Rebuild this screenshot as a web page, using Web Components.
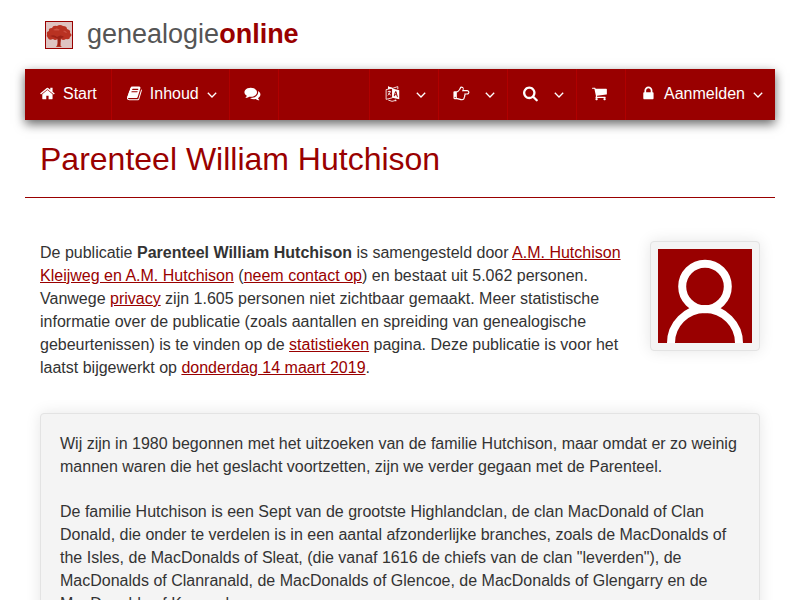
<!DOCTYPE html>
<html lang="nl">
<head>
<meta charset="utf-8">
<meta name="viewport" content="width=device-width, initial-scale=1">
<title>Parenteel William Hutchison</title>
<style>
  body {
    margin: 0;
    background: #fff;
    color: #333;
    font: 16px/23px "Liberation Sans", Arial, sans-serif;
  }
  a { color: #900; }
  p { margin: 0; }
</style>
</head>
<body>
<go-page>
  <go-logo slot="header"></go-logo>
  <go-navbar slot="nav">
    <go-nav-item icon="home" href="#start">Start</go-nav-item>
    <go-nav-item icon="book" menu>Inhoud</go-nav-item>
    <go-nav-item icon="comments" href="#forum" label="Forum"></go-nav-item>
    <go-nav-item slot="right" icon="language" menu label="Taal"></go-nav-item>
    <go-nav-item slot="right" icon="hand" menu label="Diensten"></go-nav-item>
    <go-nav-item slot="right" icon="search" menu label="Zoeken"></go-nav-item>
    <go-nav-item slot="right" icon="cart" href="#winkel" label="Winkelwagen"></go-nav-item>
    <go-nav-item slot="right" icon="lock" menu>Aanmelden</go-nav-item>
  </go-navbar>
  <go-title>Parenteel William Hutchison</go-title>
  <go-intro>
    <p>De publicatie <b>Parenteel William Hutchison</b> is samengesteld door <a href="#auteur">A.M. Hutchison Kleijweg en A.M. Hutchison</a> (<a href="#contact">neem contact op</a>) en bestaat uit 5.062 personen. Vanwege <a href="#privacy">privacy</a> zijn 1.605 personen niet zichtbaar gemaakt. Meer statistische informatie over de publicatie (zoals aantallen en spreiding van genealogische gebeurtenissen) is te vinden op de <a href="#statistieken">statistieken</a> pagina. Deze publicatie is voor het laatst bijgewerkt op <a href="#updates">donderdag 14 maart 2019</a>.</p>
    <go-avatar slot="photo"></go-avatar>
  </go-intro>
  <go-well>
    <p>Wij zijn in 1980 begonnen met het uitzoeken van de familie Hutchison, maar omdat er zo weinig mannen waren die het geslacht voortzetten, zijn we verder gegaan met de Parenteel.</p>
    <p>De familie Hutchison is een Sept van de grootste Highlandclan, de clan MacDonald of Clan Donald, die onder te verdelen is in een aantal afzonderlijke branches, zoals de MacDonalds of the Isles, de MacDonalds of Sleat, (die vanaf 1616 de chiefs van de clan "leverden"), de MacDonalds of Clanranald, de MacDonalds of Glencoe, de MacDonalds of Glengarry en de MacDonalds of Keppoch.</p>
  </go-well>
</go-page>

<script>
const ICONS = {
  home: '<path d="M1472 992v480q0 26-19 45t-45 19h-384v-384h-256v384h-384q-26 0-45-19t-19-45v-480q0-1 .5-3t.5-3l575-474 575 474q1 2 1 6zm223-69l-62 74q-8 9-21 11h-3q-13 0-21-7l-692-577-692 577q-12 8-24 7-13-2-21-11l-62-74q-8-10-7-23.5t11-21.5l719-599q32-26 76-26t76 26l244 204v-195q0-14 9-23t23-9h192q14 0 23 9t9 23v408l219 182q10 8 11 21.5t-7 23.5z"/>',
  book: '<path d="M1703 478q40 57 18 129l-275 906q-19 64-76.5 107.5t-122.5 43.5h-923q-77 0-148.5-53.5t-99.5-131.5q-24-67-2-127 0-4 3-27t4-37q1-8-3-21.5t-3-19.5q2-11 8-21t16.5-23.5 16.5-23.5q23-38 45-91.5t30-91.5q3-10 .5-30t-.5-28q3-11 17-28t17-23q21-36 42-92t25-90q1-9-2.5-32t.5-28q4-13 22-30.5t22-22.5q19-26 42.5-84.5t27.5-96.5q1-8-3-25.5t-2-26.5q2-8 9-18t18-23 17-21q8-12 16.5-30.5t15-35 16-36 19.5-32 26.5-23.5 36-11.5 47.5 5.5l-1 3q38-9 51-9h761q74 0 114 56t18 130l-274 906q-36 119-71.5 153.5t-128.5 34.5h-869q-27 0-38 15-11 16-1 43 24 70 144 70h923q29 0 56-15.5t35-41.5l300-987q7-22 5-57 38 15 59 43zm-1064 2q-4 13 2 22.5t20 9.5h608q13 0 25.5-9.5t16.5-22.5l21-64q4-13-2-22.5t-20-9.5h-608q-13 0-25.5 9.5t-16.5 22.5zm-83 256q-4 13 2 22.5t20 9.5h608q13 0 25.5-9.5t16.5-22.5l21-64q4-13-2-22.5t-20-9.5h-608q-13 0-25.5 9.5t-16.5 22.5z"/>',
  comments: '<path d="M1408 768q0 139-94 257t-256.5 186.5-353.5 68.5q-86 0-176-16-124 88-278 128-36 9-86 16h-3q-11 0-20.5-8t-11.5-21q-1-3-1-6.5t.5-6.5 2-6l2.5-5 3.5-5.5 4-5 4.5-5 4-4.5q5-6 23-25t26-29.5 22.5-29 25-38.5 20.5-44q-124-72-195-177t-71-224q0-139 94-257t256.5-186.5 353.5-68.5 353.5 68.5 256.5 186.5 94 257zm384 256q0 120-71 224.5t-195 176.5q10 24 20.5 44t25 38.5 22.5 29 26 29.5 23 25q1 1 4 4.5t4.5 5 4 5 3.5 5.5l2.5 5 2 6 .5 6.5-1 6.5q-3 14-13 22t-22 7q-50-7-86-16-154-40-278-128-90 16-176 16-271 0-472-132 58 4 88 4 161 0 309-45t264-129q125-92 192-212t67-254q0-77-23-152 129 71 204 178t75 230z"/>',
  language: '<g fill="none" stroke="#fff" stroke-width="95"><path d="M190 470L900 300V1380L190 1560Z"/><path d="M420 190L900 330L1500 130V420"/><path d="M380 690H700M540 600V690M660 700Q600 970 370 1110M430 830Q560 1050 720 1080"/><path d="M430 1640Q850 1900 1270 1680M1170 1640L1300 1650L1280 1780"/></g><path fill-rule="evenodd" d="M880 330L1660 540V1560L880 1370ZM1200 640L1040 1190L1150 1220L1185 1080L1370 1130L1405 1290L1510 1315L1345 680ZM1265 780L1340 1020L1210 985Z"/><path d="M400 90L900 290L400 440Z"/>',
  hand: '<path fill-rule="evenodd" d="M1792 768q0 105-75.5 180.5t-180.5 75.5h-169q-4 62-37 119 3 21 3 43 0 101-60 178 1 139-85 219.5t-227 80.5q-133 0-322-69-164-59-223-59h-288q-53 0-90.500-37.500T0 1408v-640q0-53 37.500-90.500t90.500-37.500h288C470 640 600 480 660 390C700 320 740 128 864 128C1030 128 1152 210 1152 384q0 70-22 128h406q105 0 180.500 75.500t75.500 180.500zM1664 768q0-51-39-89.500t-89-38.500h-576q0-20 15-48.500t33-55 33-68 15-84.500q0-67-44.500-97.500t-115.500-30.500q-24 0-90 139-24 44-37 65-40 64-112 145-71 81-101 106-69 57-140 57h-32v640h32q72 0 167 32t193.500 64 179.500 32q189 0 189-167 0-26-5-56 30-16 47.500-52.500t17.500-73.500-18-69q53-50 53-119 0-25-10-55.500t-25-47.500h331q52 0 90-38t38-90zM256 1344a64 64 0 1 0-128 0a64 64 0 1 0 128 0z"/>',
  search: '<path d="M1216 832q0-185-131.5-316.5t-316.5-131.5-316.5 131.5-131.5 316.5 131.5 316.5 316.5 131.5 316.5-131.5 131.5-316.5zm512 832q0 52-38 90t-90 38q-54 0-90-38l-343-342q-179 124-399 124-143 0-273.5-55.5t-225-150-150-225-55.5-273.5 55.5-273.5 150-225 225-150 273.5-55.5 273.5 55.5 225 150 150 225 55.5 273.5q0 220-124 399l343 343q37 37 37 90z"/>',
  cart: '<path d="M704 1536q0 52-38 90t-90 38-90-38-38-90 38-90 90-38 90 38 38 90zm896 0q0 52-38 90t-90 38-90-38-38-90 38-90 90-38 90 38 38 90zm128-1088v512q0 24-16.5 42.5t-40.5 21.5l-1044 122q13 60 13 70 0 16-24 64h920q26 0 45 19t19 45-19 45-45 19h-1024q-26 0-45-19t-19-45q0-11 8-31.5t16-36 21.5-40 15.5-29.5l-177-823h-204q-26 0-45-19t-19-45 19-45 45-19h256q16 0 28.5 6.5t19.5 15.5 13 24.5 8 26 5.5 29.5 4.5 26h1201q26 0 45 19t19 45z"/>',
  lock: '<path d="M640 768h512v-192q0-106-75-181t-181-75-181 75-75 181v192zm832 96v576q0 40-28 68t-68 28h-960q-40 0-68-28t-28-68v-576q0-40 28-68t68-28h32v-192q0-184 132-316t316-132 316 132 132 316v192h32q40 0 68 28t28 68z"/>',
};

class GoPage extends HTMLElement {
  constructor() {
    super();
    this.attachShadow({ mode: "open" }).innerHTML = `
      <style>
        :host { display: block; padding: 0 25px 40px; }
      </style>
      <header><slot name="header"></slot></header>
      <nav aria-label="Hoofdmenu"><slot name="nav"></slot></nav>
      <main><slot></slot></main>`;
  }
}

class GoLogo extends HTMLElement {
  constructor() {
    super();
    this.attachShadow({ mode: "open" }).innerHTML = `
      <style>
        :host { display: block; padding: 0 20px; }
        a {
          display: inline-flex;
          align-items: center;
          gap: 14px;
          height: 69px;
          color: #555;
          font-size: 27px;
          line-height: 32px;
          text-decoration: none;
        }
        svg { display: block; width: 28px; height: 28px; }
        span { padding-bottom: 2px; }
        b { color: #900; }
      </style>
      <a href="#home">
        <svg viewBox="0 0 28 28" aria-hidden="true">
          <defs><filter id="soft"><feGaussianBlur stdDeviation=".7"/></filter></defs>
          <rect x=".5" y=".5" width="27" height="27" fill="#dfc4c2" stroke="#900"/>
          <g fill="#b93224" filter="url(#soft)">
            <path d="M2 13Q1 11 4 10Q3 7 7 7Q8 4 12 5Q15 3 18 5Q22 5 22 8Q26 9 25 12Q28 14 25 16Q25 19 21 18Q18 20 16 18L15.500 22Q15 25 17 26H11Q13 24 12.500 18Q10 20 8 18Q4 20 3 17Q1 15 2 13Z"/>
            <path fill="#9c2218" d="M5 15Q9 13 12 16Q16 13 19 16L15.500 17.500L15 25H13L12.700 17.500Z"/>
            <path fill="#cc5142" d="M8 9Q12 6 15 9Q12 10 8 9ZM18 10Q21 9 22 12Q20 12 18 10Z"/>
          </g>
        </svg>
        <span>genealogie<b>online</b></span>
      </a>`;
  }
}

class GoNavbar extends HTMLElement {
  constructor() {
    super();
    this.attachShadow({ mode: "open" }).innerHTML = `
      <style>
        :host {
          display: flex;
          justify-content: space-between;
          background: #900;
          box-shadow: 0 4px 10px rgba(0, 0, 0, .6);
        }
        div { display: flex; }
        .left ::slotted(*) { border-right: 1px solid #b00000; }
        .right ::slotted(*) { border-left: 1px solid #b00000; }
      </style>
      <div class="left"><slot></slot></div>
      <div class="right"><slot name="right"></slot></div>`;
  }
}

class GoNavItem extends HTMLElement {
  connectedCallback() {
    const menu = this.hasAttribute("menu");
    const label = this.getAttribute("label");
    const aria = label ? ` aria-label="${label}"` : "";
    const showText = menu || !label;
    const open = menu
      ? `<button type="button" aria-haspopup="true"${aria}>`
      : `<a href="${this.getAttribute("href")}"${aria}>`;

    this.attachShadow({ mode: "open" }).innerHTML = `
      <style>
        :host { display: block; }
        a, button {
          display: flex;
          align-items: center;
          box-sizing: border-box;
          min-width: 48px;
          height: 51px;
          margin: 0;
          padding: 0 14px 2px 15px;
          border: 0;
          background: none;
          color: #fff;
          font: inherit;
          text-decoration: none;
          cursor: pointer;
        }
        button { padding-right: 12px; }
        a:hover, button:hover { background: #800000; }
        svg { display: block; flex: none; }
        .icon { width: 18px; height: 16px; fill: #fff; }
        .text { padding-left: 5px; }
        .caret { width: 10px; height: 6px; margin: 2px 0 0 8px; fill: none; stroke: #fff; }
      </style>
      ${open}
        <svg class="icon" viewBox="64 64 1792 1792" preserveAspectRatio="xMinYMid meet" overflow="visible" aria-hidden="true">${ICONS[this.getAttribute("icon")]}</svg>
        ${showText ? '<span class="text"><slot></slot></span>' : ""}
        ${menu ? '<svg class="caret" viewBox="0 0 10 6" aria-hidden="true"><path stroke-width="1.3" d="M.8 .8L5 5L9.200 .8"/></svg>' : ""}
      ${menu ? "</button>" : "</a>"}`;
  }
}

class GoTitle extends HTMLElement {
  constructor() {
    super();
    this.attachShadow({ mode: "open" }).innerHTML = `
      <style>
        :host { display: block; border-bottom: 1px solid #900; }
        h1 {
          margin: 0;
          padding: 21px 15px 19px;
          color: #900;
          font-size: 32px;
          font-weight: 400;
          line-height: 37px;
        }
      </style>
      <h1><slot></slot></h1>`;
  }
}

class GoIntro extends HTMLElement {
  constructor() {
    super();
    this.attachShadow({ mode: "open" }).innerHTML = `
      <style>
        :host { display: flex; align-items: flex-start; gap: 25px; padding: 43px 15px 34px; }
        div { flex: 1; }
      </style>
      <div><slot></slot></div>
      <slot name="photo"></slot>`;
  }
}

class GoAvatar extends HTMLElement {
  constructor() {
    super();
    this.attachShadow({ mode: "open" }).innerHTML = `
      <style>
        :host {
          display: block;
          flex: none;
          padding: 7px;
          border: 1px solid #e3e3e3;
          border-radius: 4px;
          background: #f4f4f4;
          box-shadow: 0 0 15px rgba(0, 0, 0, .1);
        }
        svg { display: block; width: 94px; height: 94px; }
      </style>
      <svg viewBox="0 0 94 94" role="img" aria-label="Auteur">
        <rect width="94" height="94" fill="#900"/>
        <g fill="none" stroke="#fff" stroke-width="8">
          <circle cx="47" cy="37.500" r="22.800"/>
          <circle cx="47" cy="94" r="34"/>
        </g>
      </svg>`;
  }
}

class GoWell extends HTMLElement {
  constructor() {
    super();
    this.attachShadow({ mode: "open" }).innerHTML = `
      <style>
        :host {
          display: flex;
          flex-direction: column;
          gap: 22px;
          margin: 0 15px;
          padding: 18px 19px;
          border: 1px solid #e3e3e3;
          border-radius: 4px;
          background: #f4f4f4;
          box-shadow: 0 0 15px rgba(0, 0, 0, .1);
        }
      </style>
      <slot></slot>`;
  }
}

customElements.define("go-page", GoPage);
customElements.define("go-logo", GoLogo);
customElements.define("go-navbar", GoNavbar);
customElements.define("go-nav-item", GoNavItem);
customElements.define("go-title", GoTitle);
customElements.define("go-intro", GoIntro);
customElements.define("go-avatar", GoAvatar);
customElements.define("go-well", GoWell);
</script>
</body>
</html>
